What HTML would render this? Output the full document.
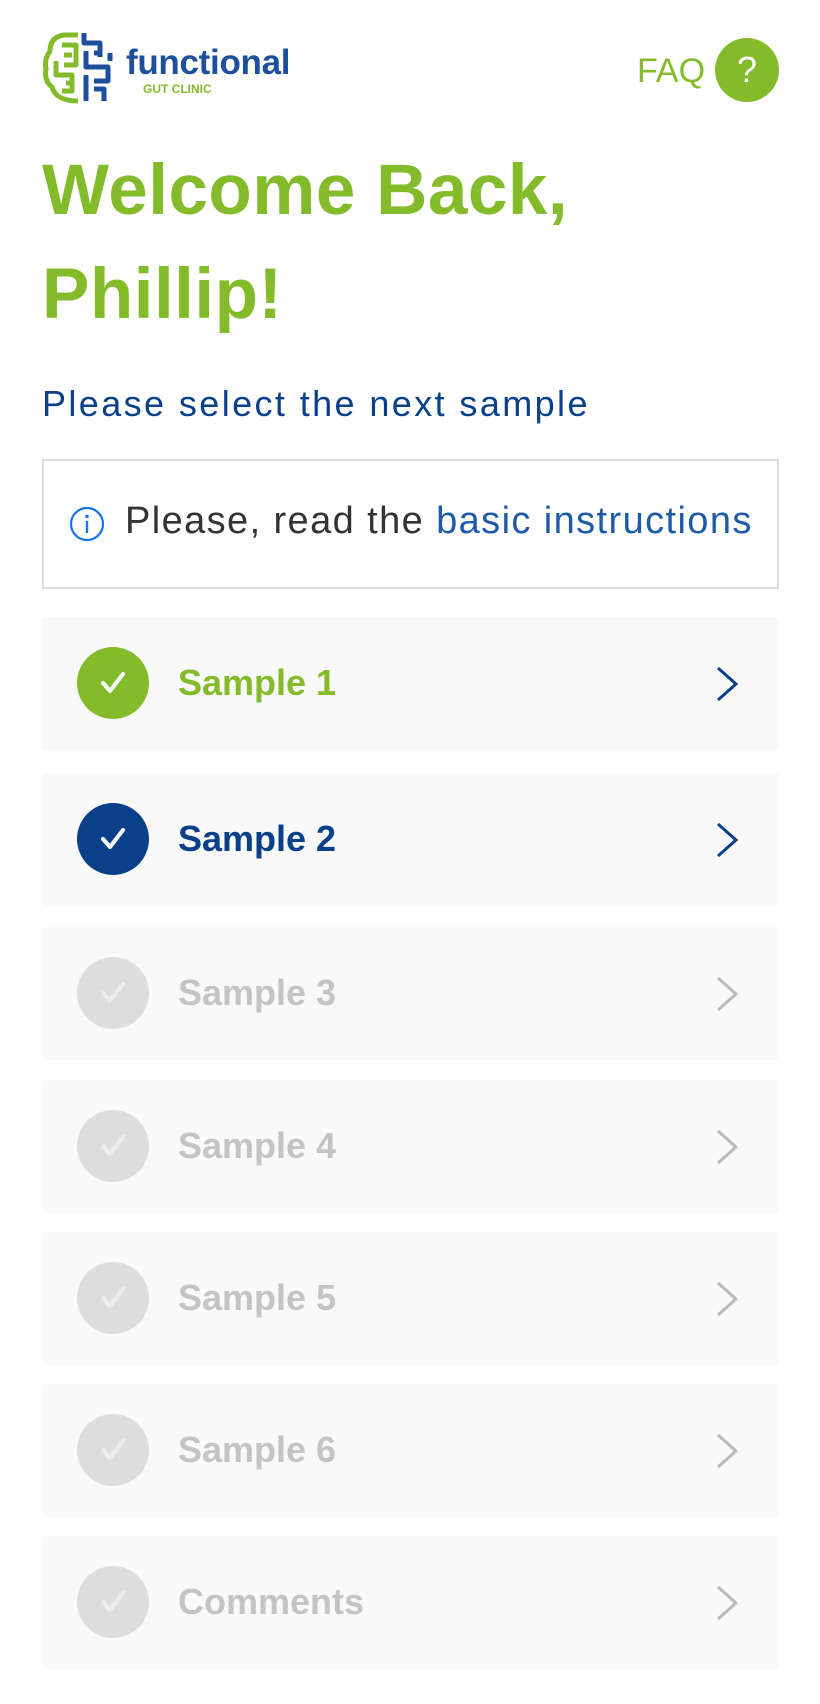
<!DOCTYPE html>
<html><head><meta charset="utf-8"><style>
*{margin:0;padding:0;box-sizing:border-box}
body{width:820px;height:1704px;background:#fff;font-family:"Liberation Sans",sans-serif;position:relative;overflow:hidden}
.abs{position:absolute}
.h1{left:42px;color:#84bb2b;font-weight:bold;font-size:71px;letter-spacing:0.5px;white-space:nowrap}
.card{position:absolute;left:42px;width:737px;height:133px;background:#f9f9f9;border-radius:4px}
.card .c{position:absolute;left:35px;top:30px;width:72px;height:72px;border-radius:50%;background:#ddd}
.card .c svg{position:absolute;left:22px;top:22px}
.card .t{position:absolute;left:136px;top:45px;font-size:36px;font-weight:bold;color:#c4c4c4;line-height:42px}
.card .ch{position:absolute;left:672px;top:48px}
</style></head><body>
<svg class="abs" style="left:42px;top:31px" width="76" height="74" viewBox="0 0 76 74">
<g fill="none" stroke="#84bb2b" stroke-width="5" stroke-linejoin="round">
<path d="M36 4 H22 Q8 6 8 20 Q2 28 4 38 Q2 50 10 56 Q14 70 36 70"/>
<path d="M20 14 H34 V34 H22"/><path d="M22 24 H30"/><path d="M14 30 V44 H30 V60 H20"/><path d="M24 52 H30"/>
</g>
<g fill="none" stroke="#1e4f9c" stroke-width="5" stroke-linejoin="round">
<path d="M42 2 V12 H58 V26"/><path d="M44 20 V36 H66 V50 H52"/><path d="M52 22 H60"/><path d="M44 44 V70"/><path d="M52 58 H62 V70"/><path d="M68 22 V30"/>
</g></svg>
<div class="abs" style="left:126px;top:43px;font-size:35px;font-weight:bold;color:#1e4f9c;letter-spacing:-0.3px">functional</div>
<div class="abs" style="left:143px;top:82px;font-size:12px;font-weight:bold;color:#84bb2b">GUT CLINIC</div>
<div class="abs" style="left:637px;top:52px;font-size:34px;color:#84bb2b">FAQ</div>
<div class="abs" style="left:715px;top:38px;width:64px;height:64px;border-radius:50%;background:#84bb2b;color:#fff;font-size:36px;text-align:center;line-height:64px">?</div>
<div class="abs h1" style="top:150px">Welcome Back,</div>
<div class="abs h1" style="top:254px">Phillip!</div>
<div class="abs" style="left:42px;top:383px;font-size:36px;letter-spacing:2.4px;color:#0a3f8a;white-space:nowrap">Please select the next sample</div>
<div class="abs" style="left:42px;top:459px;width:737px;height:130px;border:2px solid #ddd"></div>
<svg class="abs" style="left:69px;top:506px" width="36" height="36" viewBox="0 0 36 36"><circle cx="18" cy="18" r="16" fill="none" stroke="#1a73e8" stroke-width="2.2"/><circle cx="18" cy="10.5" r="1.8" fill="#1a73e8"/><path d="M18 15 V27" stroke="#1a73e8" stroke-width="2.4"/></svg>
<div class="abs" style="left:125px;top:500px;font-size:38px;letter-spacing:1.4px;color:#333;white-space:nowrap">Please, read the <span style="color:#1e5aa8">basic instructions</span></div>

<div class="card" style="top:617px"><div class="c" style="background:#84bb2b"><svg width="28" height="28" viewBox="0 0 28 28"><path d="M4 14 L11 22 L24 5" fill="none" stroke="#fff" stroke-width="4" stroke-linecap="round" stroke-linejoin="round"/></svg></div><div class="t" style="color:#84bb2b">Sample 1</div><svg class="ch" width="26" height="38" viewBox="0 0 26 38"><path d="M4 3 L22 19 L4 35" fill="none" stroke="#0a3f8a" stroke-width="3"/></svg></div>
<div class="card" style="top:773px"><div class="c" style="background:#0a3f8a"><svg width="28" height="28" viewBox="0 0 28 28"><path d="M4 14 L11 22 L24 5" fill="none" stroke="#fff" stroke-width="4" stroke-linecap="round" stroke-linejoin="round"/></svg></div><div class="t" style="color:#0a3f8a">Sample 2</div><svg class="ch" width="26" height="38" viewBox="0 0 26 38"><path d="M4 3 L22 19 L4 35" fill="none" stroke="#0a3f8a" stroke-width="3"/></svg></div>
<div class="card" style="top:927px"><div class="c"><svg width="28" height="28" viewBox="0 0 28 28"><path d="M4 14 L11 22 L24 5" fill="none" stroke="#eee" stroke-width="4" stroke-linecap="round" stroke-linejoin="round"/></svg></div><div class="t">Sample 3</div><svg class="ch" width="26" height="38" viewBox="0 0 26 38"><path d="M4 3 L22 19 L4 35" fill="none" stroke="#bbb" stroke-width="3"/></svg></div>
<div class="card" style="top:1080px"><div class="c"><svg width="28" height="28" viewBox="0 0 28 28"><path d="M4 14 L11 22 L24 5" fill="none" stroke="#eee" stroke-width="4" stroke-linecap="round" stroke-linejoin="round"/></svg></div><div class="t">Sample 4</div><svg class="ch" width="26" height="38" viewBox="0 0 26 38"><path d="M4 3 L22 19 L4 35" fill="none" stroke="#bbb" stroke-width="3"/></svg></div>
<div class="card" style="top:1232px"><div class="c"><svg width="28" height="28" viewBox="0 0 28 28"><path d="M4 14 L11 22 L24 5" fill="none" stroke="#eee" stroke-width="4" stroke-linecap="round" stroke-linejoin="round"/></svg></div><div class="t">Sample 5</div><svg class="ch" width="26" height="38" viewBox="0 0 26 38"><path d="M4 3 L22 19 L4 35" fill="none" stroke="#bbb" stroke-width="3"/></svg></div>
<div class="card" style="top:1384px"><div class="c"><svg width="28" height="28" viewBox="0 0 28 28"><path d="M4 14 L11 22 L24 5" fill="none" stroke="#eee" stroke-width="4" stroke-linecap="round" stroke-linejoin="round"/></svg></div><div class="t">Sample 6</div><svg class="ch" width="26" height="38" viewBox="0 0 26 38"><path d="M4 3 L22 19 L4 35" fill="none" stroke="#bbb" stroke-width="3"/></svg></div>
<div class="card" style="top:1536px"><div class="c"><svg width="28" height="28" viewBox="0 0 28 28"><path d="M4 14 L11 22 L24 5" fill="none" stroke="#eee" stroke-width="4" stroke-linecap="round" stroke-linejoin="round"/></svg></div><div class="t">Comments</div><svg class="ch" width="26" height="38" viewBox="0 0 26 38"><path d="M4 3 L22 19 L4 35" fill="none" stroke="#bbb" stroke-width="3"/></svg></div>
</body></html>
